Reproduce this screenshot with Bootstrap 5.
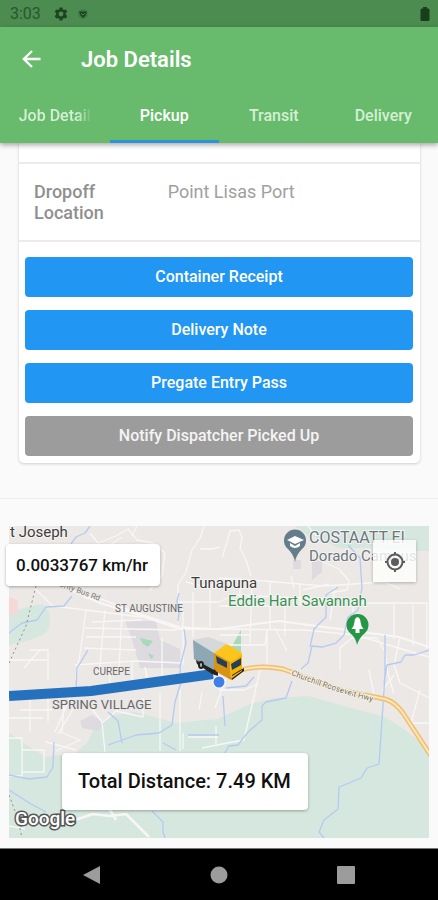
<!DOCTYPE html>
<html lang="en">
<head>
<meta charset="utf-8">
<meta name="viewport" content="width=device-width, initial-scale=1">
<title>Job Details</title>
<link href="https://cdn.jsdelivr.net/npm/bootstrap@5.3.0/dist/css/bootstrap.min.css" rel="stylesheet">
<style>
body{font-family:Roboto,"Liberation Sans",sans-serif;background:#fafafa;color:#111}
.status-bar{background:#4c8c50;color:#2b562e;height:27px;font-size:16px;padding:0 8px 0 10px}
.app-bar{background:#68bb6c;box-shadow:0 2px 5px rgba(0,0,0,.35);z-index:2}
.title-row{height:65px;padding:0 22px}
.title-row h1{font-size:22px;font-weight:600;line-height:28px;padding-left:39px}
.job-tabs{height:51px}
.job-tabs .nav-link{color:#d4efd5;font-size:16px;font-weight:500;line-height:24px;height:51px;padding:12px 18px;border-bottom:3px solid transparent;border-radius:0;white-space:nowrap;text-align:center}
.job-tabs .nav-link.active{color:#fff;border-bottom-color:#2b93d8}
.fade-label{display:block;overflow:hidden;-webkit-mask-image:linear-gradient(90deg,#000 80%,transparent);mask-image:linear-gradient(90deg,#000 80%,transparent)}
.job-card{margin:0 18px 0 19px;border:0;border-radius:0 0 5px 5px;box-shadow:0 1px 3px rgba(0,0,0,.18)}
.prior-row{height:21px;border-bottom:2px solid #ececec}
.field-row{border-bottom:2px solid #ececec;font-size:18px;line-height:21px;padding:17px 0;color:#a0a0a0}
.field-row dt,.field-row dd{padding-left:15px;margin:0}
.field-row dt{font-weight:500;color:#8f8f8f}
.actions{padding:15px 7px 7px 6px;gap:13px}
.actions .btn{height:40px;border:0;border-radius:4px;font-size:16px;font-weight:500;line-height:24px;padding:8px;color:#fff;background:#2196f3}
.actions .btn.btn-done{background:#9c9c9c;color:#f4f4f4}
.divider{margin:35px 0 27px;border-top:1px solid #eee;opacity:1}
.map-wrap{margin:0 9px 10px}
.map-wrap>svg{display:block;width:100%;height:auto;overflow:visible}
.chip{background:#fff;box-shadow:0 1px 3px rgba(0,0,0,.3);border-radius:4px;font-weight:500;white-space:nowrap}
.speed{left:-3px;top:18px;font-size:17px;line-height:24px;padding:9px 12px 9px 10px}
.distance{left:53px;bottom:28px;font-size:20px;line-height:29px;padding:14px 17px 14px 16px}
.locate{right:13px;top:14px;width:43px;height:42px;border:0;padding:0;background:rgba(255,255,255,.8);box-shadow:0 1px 3px rgba(0,0,0,.25)}
.sys-nav{background:#000;height:52px;border-top:1px solid #777}
.sys-nav button{background:none;border:0;padding:0;line-height:1}
.sys-keys{padding:0 10px}
</style>
</head>
<body class="d-flex flex-column min-vh-100">
<div class="status-bar d-flex align-items-center">
  <span>3:03</span>
  <svg class="ms-2 me-1" width="24" height="18" viewBox="0 0 24 18" aria-hidden="true"><g transform="translate(12 9)" fill="#1d4422"><path fill-rule="evenodd" d="M-1.400-6.500h2.800l.4 1.800 1.300.8 1.800-.7 1.400 2.400-1.400 1.300v1.600L6.300 2 4.900 4.500l-1.800-.6-1.300.8-.4 1.800h-2.800l-.4-1.800-1.300-.8-1.800.6L-6.300 2-4.900.7V-.9l-1.400-1.300 1.400-2.400 1.800.7 1.300-.8zM2.400 0a2.400 2.400 0 1 0-4.800 0 2.400 2.400 0 1 0 4.800 0"/></g></svg>
  <svg width="12" height="14" viewBox="0 0 12 14" aria-hidden="true"><circle cx="6" cy="7" r="5" fill="#417d46"/><path d="M2 4.500h8L8.500 8.500 6 11 3.500 8.500z" fill="#1d4422"/><path d="M4 6.500l2 1.500 2-2" stroke="#4c8c50" fill="none"/></svg>
  <svg class="ms-auto" width="10" height="16" viewBox="0 0 10 16" aria-hidden="true"><path d="M3 1h4v1.500h1.500l1 1V14a1 1 0 0 1-1 1h-7a1 1 0 0 1-1-1V3.500l1-1H3z" fill="#173f1c"/></svg>
</div>
<header class="app-bar position-relative">
  <div class="title-row d-flex align-items-center">
    <a href="#" class="d-flex" aria-label="Back"><svg width="20" height="20" viewBox="0 0 20 20"><path d="M18.500 9H2M10 1 1.800 9l8.200 8" fill="none" stroke="#fff" stroke-width="2.300"/></svg></a>
    <h1 class="mb-0 text-white">Job Details</h1>
  </div>
  <nav class="job-tabs nav flex-nowrap">
    <div class="col-3"><a class="nav-link" href="#"><span class="fade-label">Job Detail</span></a></div>
    <div class="col-3"><a class="nav-link active" aria-current="page" href="#">Pickup</a></div>
    <div class="col-3"><a class="nav-link" href="#">Transit</a></div>
    <div class="col-3"><a class="nav-link" href="#">Delivery</a></div>
  </nav>
</header>
<main>
  <section class="card job-card">
    <div class="prior-row"></div>
    <dl class="field-row row g-0 mb-0">
      <dt class="col-4">Dropoff<br>Location</dt>
      <dd class="col-8">Point Lisas Port</dd>
    </dl>
    <div class="actions d-grid">
      <button type="button" class="btn">Container Receipt</button>
      <button type="button" class="btn">Delivery Note</button>
      <button type="button" class="btn">Pregate Entry Pass</button>
      <button type="button" class="btn btn-done">Notify Dispatcher Picked Up</button>
    </div>
  </section>
  <hr class="divider">
  <section class="map-wrap position-relative" aria-label="Map">
    <svg viewBox="9 526 420 312" font-family="Roboto, Liberation Sans, sans-serif">
      <clipPath id="frame"><path d="M9 526h420v312H9z"/></clipPath>
      <g clip-path="url(#frame)">
      <path fill="#ebe8e5" d="M9 526h420v312H9z"/>
      <g fill="#d5e7de">
        <path d="M9 733l18 12 18 12 30-4 12-10 8-15 15-12 25-4 20 5 20 6 43-4 32-15 25-6 33-2 32 9 45 12 20 13 24 19v89H9z"/>
        <path d="M295 526h134v25h-28l-30-3-32 0-18-9-12-3z"/>
        <path d="M9 614l15-6 19-4 6 8 1 12-4 9-16 7-21 5z"/>
      </g>
      <path fill="#f5d9d8" d="M9 597l9 3v14l-9 2z"/>
      <g fill="#dedbe0"><path d="M125 621h31l4 19 20 9v19h-40l-8-28z"/><path d="M80 721l12-6 13 8-7 8-16-3zM312 558l10 2v12l-10 8zM293 560h8v9h-8z"/></g>
      <path fill="#a8d9b9" d="M140 638l13 3-5 6-5-3zM148 653l6 3-3 3zM241 630v23h-13z"/>
      <g fill="none" stroke="#f8f7f6" stroke-width="1.300" stroke-linejoin="round">
        <path d="M90 533l8 10 18-7 12-7 9 11 16 3 12 10-3 22-12 15M110 545l12-8M132 536l5-10M204 526l-4 12-8 12-6 22-8 13v14M200 549h12l8-2M222 558l5-16 3-11 9-1 3 8-2 10 6 12 5 16M219 578l45 3 60 5 60-4 16 7M240 583v14M252 583l-2 60M270 581v48M300 583v23M335 587l-5 33M186 582l12 3 20 1"/>
        <path d="M60 585l40 18 30 9 50 17 39 0 60-8 60 8 60 8 30 10" stroke-width="2"/>
        <path d="M84 598l20 2 30 12 46 15 40 2 85 1 50 5 74 22" stroke-width="1.500"/>
        <path d="M35 589l18 17 33 4-4 30-6 40M86 610l55 7M92 622l50-2M86 637h50M84 648l52 2M105 610l-6 65M122 612l-3 57M85 628l92 2M30 650h18v30M9 660h39M40 650l-16 18M75 665l60-4 47 2M110 665v28M132 662v28M145 667l4 20M162 638v42M183 612v53M193 592v45M210 590v37M178 602h41l15-7 90 4M219 606h50M285 596v40"/>
        <path d="M352 603h75v46M394 603v36M413 605v40M353 603v28M220 645h45l2-16M267 629v39M275 628l12 23M220 635h30M230 668l-15 40M219 690h25l14-6M260 670l-16 70-22 4-20 4M160 693v58M180 690v28M202 692l-3 18"/>
        <path d="M340 670v-22l12-10h25l8 14 3 22 6 20M400 637l-6 28 6 18 29 15M420 690l-9 33h18M394 675l-12 16M369 670l5 25"/>
        <path d="M30 700v32M48 697v25M70 698l-15 34M20 710h32M9 718h34M9 738h13v38H9M22 750h22v22h-22M64 704l-2 28M75 706l-17 28M90 706l12 16 3 30M102 723l14-12 27 6V698M60 732l20 8-24 11M46 742l30 8M180 716v35M183 733v16M216 726v18M218 737h-30M9 826l16 3"/>
        <path stroke-width="2.500" d="M75 820l18-6 17 2 16-2 23 23M110 810l6 10"/>
        <path d="M317 559l22 10 10 12-2 9-18 3M303 590l26-6M291 576l3 12M308 526l8 10"/>
      </g>
      <g fill="none" stroke="#b5caf1" stroke-width="1.300" stroke-linejoin="round">
        <path d="M90 526l-5 7-9 4-5 7M72 596l-8 10-18 1-9 13-15 3-13 10M88 650l-6 10-5 8-1 22M179 593l-2 8 2 12-1 8M184 629l2 14-3 12-3 12 1 15-6 20-3 23-13 8-23 2-28 10M108 712l10 9 4 22M54 742l-1 25-6 10-18 2-20-4M9 790l22 14 15 8M163 743l13 7M188 735h31M225 726l-2-30M226 688l20-2 8-9M152 811l11 11v10l2 6"/>
        <path d="M348 545l12 13 2 30-4 22-10 7-4 18-8 8-14 4-10-1-4 17-7 6M338 587l-12 8v22l-12 12-4 18M385 635v40l-3 45-3 44-12 4-6 10-12 5-10 4-1 22-14 11-5 12 5 6M429 650l-15 5-9 0-4 7-14 3-3 18M292 681l-6 17-20 4-4 4v14l-14 12-10 13-9 1-5 8"/>
      </g>
      <path d="M36 586l-10 40-17 37M9 795l9 24 4 19" fill="none" stroke-dasharray="2 3" stroke="#8c918f"/>
      <g fill="none" stroke-linejoin="round">
        <path d="M238 671q20-7 45-2l57 21 45 9q10 3 18 14l28 43" stroke="#f0bd72" stroke-width="5"/>
        <path d="M238 671q20-7 45-2l57 21 45 9q10 3 18 14l28 43" stroke="#fde7b5" stroke-width="2"/>
        <path d="M9 696l82-5 122-17" stroke="#2671bd" stroke-width="10"/>
      </g>
      </g>
      <path id="hwy" d="M291 675q45 18 92 29" fill="none"/>
      <text font-size="8" fill="#77705c" stroke="#f4eee4" stroke-width="2" paint-order="stroke"><textPath href="#hwy">Churchill Roosevelt Hwy</textPath></text>
      <text font-size="8" fill="#77777a" transform="translate(50 583) rotate(20)">Priority Bus Rd</text>
      <g fill="#65676b">
        <text x="115" y="612" font-size="10">ST AUGUSTINE</text>
        <text x="93" y="675" font-size="10">CUREPE</text>
        <text x="52" y="709" font-size="13">SPRING VILLAGE</text>
      </g>
      <g fill="#3d3d3d" stroke="#f6f4f2" stroke-width="2" paint-order="stroke">
        <text x="10" y="537" font-size="15">t Joseph</text>
        <text x="191" y="588" font-size="15">Tunapuna</text>
        <text x="228" y="606" font-size="15" fill="#389154">Eddie Hart Savannah</text>
        <g fill="#6a767d"><text x="309" y="543" font-size="16">COSTAATT El</text><text x="309" y="561" font-size="15">Dorado Campus</text></g>
      </g>
      <path d="M295 562q-1-7-7-13a11 11 0 1 1 14 0q-6 6-7 13" fill="#647c8b"/>
      <path d="M287 540l8-4 9 4-9 4zM290 543v3q5 4 10 0v-3l-5 3zM303 540v5" fill="#fff"/>
      <path d="M357 645q-1-7-7-12a11 11 0 1 1 15 0q-6 5-8 12" fill="#269647"/>
      <path d="M357.500 617q3 1 3 5l1 4 2 3h-4v4h-4v-4h-4l2-3 1-4q0-4 3-5" fill="#fff"/>
      <g stroke-linejoin="round">
        <path fill="#28231f" d="M195 657l23 12v7l-6-2-15-10z"/>
        <path fill="#28231f" d="M230 677l14-9v3l-12 9z"/>
        <path fill="#d5d9d9" d="M193 640l15-3 20 7-14 9z"/>
        <path fill="#8fa7b3" d="M193 640l21 13v17l-20-11z"/>
        <ellipse cx="201" cy="665" rx="3" ry="4" fill="#222"/><ellipse cx="201" cy="665" rx="1" ry="2" fill="#bbb"/>
        <path fill="#fbc51d" d="M214 653l11-8q2-1 4 0l13 8v4l-12 6z"/>
        <path fill="#d89312" d="M214 653l16 9 1 18-14-8-3-3z"/>
        <path fill="#f5b400" d="M230 662l12-7v16l-11 8z"/>
        <path fill="#233f59" d="M216 656l11 6v6l-10-5zM231 664l10-6v7l-9 5z"/>
        <path fill="#222" d="M232 675l10-6v1l-10 6z"/>
      </g>
      <circle cx="219" cy="682" r="6.500" fill="#fff"/><circle cx="219" cy="682" r="5.500" fill="#407fe8"/>
      <text x="15" y="825" font-size="19" font-weight="500" fill="#fff" stroke="#555" stroke-width="3" paint-order="stroke">Google</text>
    </svg>
    <div class="chip speed position-absolute">0.0033767 km/hr</div>
    <button type="button" class="locate position-absolute" aria-label="My location"><svg width="22" height="22" viewBox="0 0 22 22"><circle cx="11" cy="11" r="7.500" fill="none" stroke="#5c5c5c" stroke-width="2"/><circle cx="11" cy="11" r="4" fill="#5c5c5c"/><path d="M11 1v3M11 18v3M1 11h3M18 11h3" stroke="#5c5c5c" stroke-width="2"/></svg></button>
    <div class="chip distance position-absolute">Total Distance: 7.49 KM</div>
  </section>
</main>
<footer class="sys-nav mt-auto d-flex justify-content-center align-items-center">
  <div class="sys-keys d-flex justify-content-between col-8">
    <button type="button" aria-label="Back"><svg width="18" height="18" viewBox="0 0 18 18"><path d="M17 0v18L0 9z" fill="#9c9c9c"/></svg></button>
    <button type="button" aria-label="Home"><svg width="18" height="18" viewBox="0 0 18 18"><circle cx="9" cy="9" r="8.500" fill="#9c9c9c"/></svg></button>
    <button type="button" aria-label="Overview"><svg width="18" height="18" viewBox="0 0 18 18"><rect width="18" height="18" rx="1" fill="#9c9c9c"/></svg></button>
  </div>
</footer>
<script src="https://cdn.jsdelivr.net/npm/bootstrap@5.3.0/dist/js/bootstrap.bundle.min.js"></script>
</body>
</html>
